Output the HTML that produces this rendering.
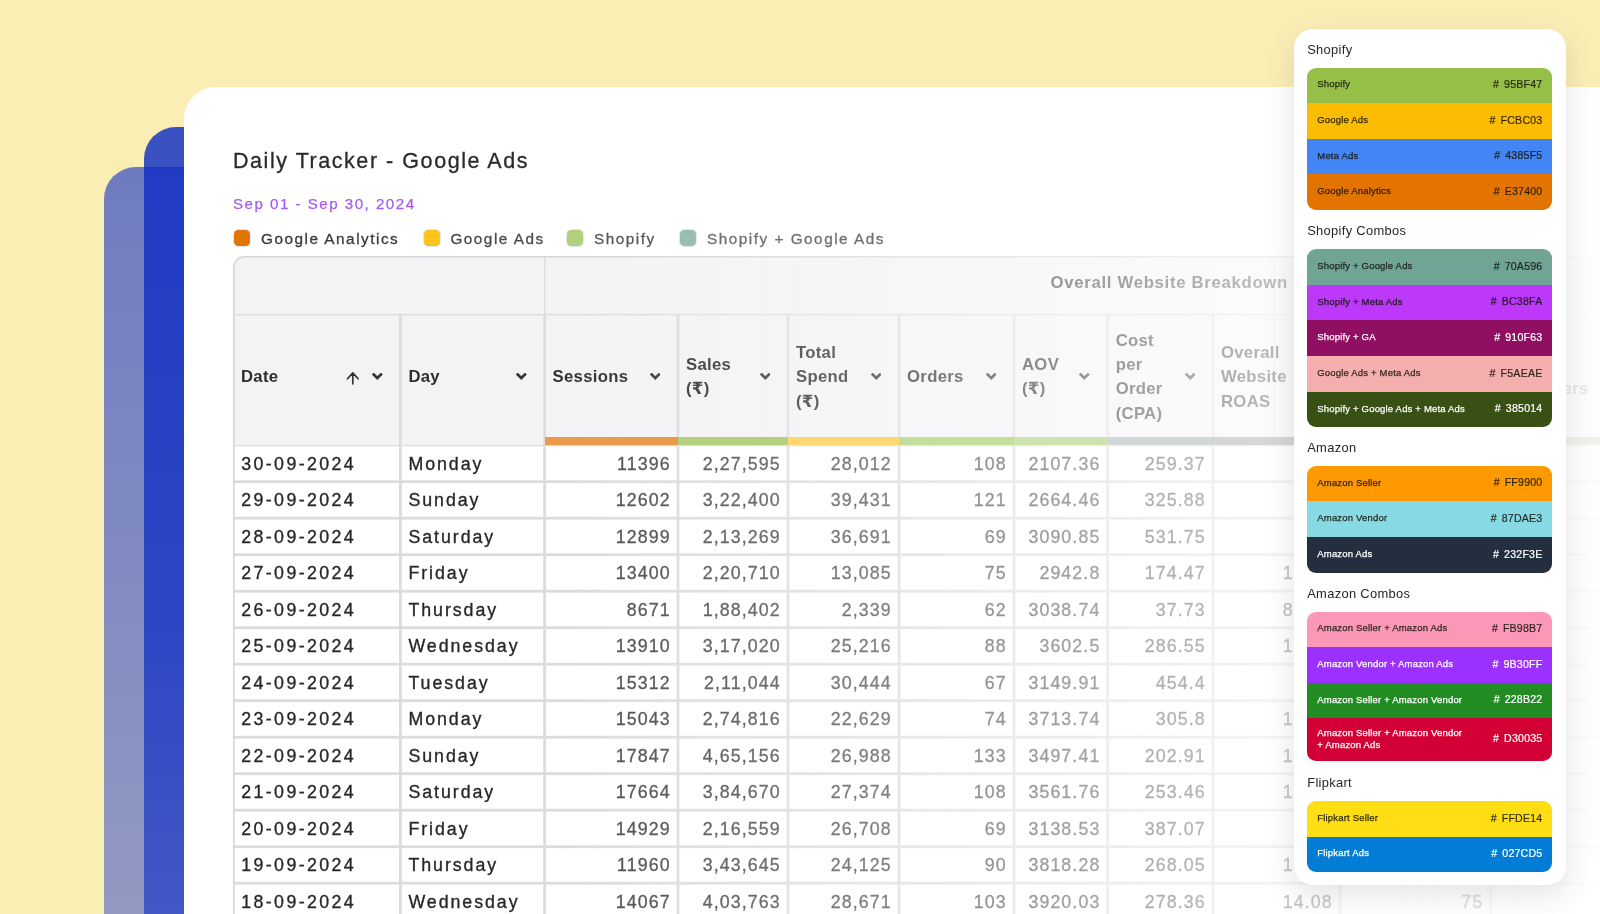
<!DOCTYPE html>
<html lang="en"><head><meta charset="utf-8"><title>Daily Tracker - Google Ads</title>
<style>
*{box-sizing:border-box;margin:0;padding:0}
html,body{width:1600px;height:914px;overflow:hidden}
body{background:#FBEEB5;font-family:"Liberation Sans","DejaVu Sans",sans-serif;position:relative;color:#2b2b2b}
.s1{position:absolute;left:104px;top:167px;width:300px;height:760px;border-radius:32px 0 0 0;background:linear-gradient(to bottom,#6E7BC0 0,#9299C1 100%)}
.s2{position:absolute;left:144px;top:127px;width:300px;height:800px;border-radius:32px 0 0 0;background:linear-gradient(to bottom,#3A51C1 0,#3A51C1 40px,#213BC4 40px,#2D46C4 62%,#4459C5 100%)}
.card{position:absolute;left:184px;top:87px;width:1500px;height:900px;border-radius:32px 0 0 0;background:#fff}
.title{position:absolute;left:232.5px;top:146px;font-size:21.5px;line-height:30px;color:#2a2a2a;letter-spacing:1.55px;white-space:nowrap;-webkit-text-stroke:.3px #2a2a2a}
.date{position:absolute;left:232.5px;top:194.4px;font-size:15.1px;line-height:20px;color:#A65CF3;letter-spacing:1.5px;white-space:nowrap;-webkit-text-stroke:.25px #A65CF3}
.legend{position:absolute;left:233px;top:227px;height:20px;white-space:nowrap;font-size:15.3px;line-height:20px;color:#3a3a3a;letter-spacing:1.52px;-webkit-text-stroke:.3px}
.legend span{position:absolute;top:2px}
.legend i{position:absolute;top:2.6px;width:16px;height:16.4px;border-radius:4.5px;margin-left:.9px;box-shadow:0 0 0 1px rgba(190,205,225,.45)}
.tbl{position:absolute;left:233px;top:256px;width:1367px;height:658px;background:#fff;border-radius:11px 0 0 0;overflow:hidden}
.hbg{position:absolute;left:0;top:0;width:1367px;height:189.6px;background:#F3F3F6}
.grid{position:absolute;left:0;top:0;width:1367px;height:658px}
.gt{position:absolute;left:817.5px;top:17px;font-size:16.7px;line-height:20px;font-weight:bold;color:#3c3c3c;letter-spacing:.72px;white-space:nowrap}
.hc{position:absolute;top:59.5px;height:129.8px;font-weight:bold;font-size:16.7px;line-height:24.3px;color:#2e2e2e;letter-spacing:.3px;display:flex;align-items:center;padding-left:8px;padding-bottom:6px}
.chev{position:absolute;width:10.6px;height:7.1px;top:57.8px;margin-left:.4px;color:#333}
.arr{position:absolute;width:13.6px;height:14.4px;top:55.4px;color:#333}
.c{position:absolute;height:34px;font-size:17.8px;line-height:34px;color:#4a4a4a;white-space:nowrap;letter-spacing:1.1px;-webkit-text-stroke:.3px}
.c.d{padding-left:8.2px;color:#272727;letter-spacing:2.4px;-webkit-text-stroke:.33px}
.c.y{padding-left:8px;color:#272727;letter-spacing:1.95px;-webkit-text-stroke:.33px}
.c.r{text-align:right;padding-right:7.3px}
.fade{position:absolute;left:545px;top:250px;width:1055px;height:664px;background:linear-gradient(to right,rgba(255,255,255,0) 0,rgba(255,255,255,.645) 705px,rgba(255,255,255,.9) 1055px)}
.bar{position:absolute;top:437px;height:8.2px}
.panel{position:absolute;left:1294px;top:29px;width:272px;height:856px;background:#fff;border-radius:19px;box-shadow:0 9px 30px rgba(60,60,90,.15)}
.panel h3{position:absolute;left:13.2px;font-weight:normal;font-size:12.9px;line-height:16px;color:#262626;letter-spacing:.32px;white-space:nowrap;margin-top:.7px}
.grp{position:absolute;left:13.3px;width:245.2px;border-radius:9px;overflow:hidden}
.sw{position:relative;height:35.6px;font-size:9.5px;line-height:12px;color:rgba(20,20,10,.85);letter-spacing:.18px;-webkit-text-stroke:.25px}
.sw span{position:absolute;left:10px;top:10.9px;white-space:nowrap}
.sw em{position:absolute;right:10px;top:10.5px;font-style:normal;font-size:10.6px;letter-spacing:.22px;word-spacing:1.7px;white-space:nowrap;-webkit-text-stroke:.2px}
.sw.w{color:#fff}
.title,.date,.legend,.tbl,.panel{will-change:transform}
</style></head><body>
<div class="s1"></div><div class="s2"></div>
<div class="card"></div>
<div class="title">Daily Tracker - Google Ads</div>
<div class="date">Sep 01 - Sep 30, 2024</div>
<div class="legend">
<i style="left:0.3px;background:#E37400"></i><span style="left:28px">Google Analytics</span>
<i style="left:189.8px;background:#FCC419"></i><span style="left:217.4px;color:#4a4a4a">Google Ads</span>
<i style="left:333px;background:#B1D07C"></i><span style="left:361px;color:#5a5a5a">Shopify</span>
<i style="left:446.6px;background:#97BEB0"></i><span style="left:474px;color:#707070">Shopify + Google Ads</span>
</div>
<div class="tbl"><div class="hbg"></div>
<svg class="grid" viewBox="0 0 1367 658"><rect x="0" y="189" width="1367" height="1.3" fill="#DCDCDC"/><rect x="0" y="224.3" width="1367" height="2.8" fill="#DCDCDC"/><rect x="0" y="260.8" width="1367" height="2.8" fill="#DCDCDC"/><rect x="0" y="297.3" width="1367" height="2.8" fill="#DCDCDC"/><rect x="0" y="333.8" width="1367" height="2.8" fill="#DCDCDC"/><rect x="0" y="370.3" width="1367" height="2.8" fill="#DCDCDC"/><rect x="0" y="406.8" width="1367" height="2.8" fill="#DCDCDC"/><rect x="0" y="443.3" width="1367" height="2.8" fill="#DCDCDC"/><rect x="0" y="479.8" width="1367" height="2.8" fill="#DCDCDC"/><rect x="0" y="516.3" width="1367" height="2.8" fill="#DCDCDC"/><rect x="0" y="552.8" width="1367" height="2.8" fill="#DCDCDC"/><rect x="0" y="589.3" width="1367" height="2.8" fill="#DCDCDC"/><rect x="0" y="625.8" width="1367" height="2.8" fill="#DCDCDC"/><rect x="0" y="662.3" width="1367" height="2.8" fill="#DCDCDC"/><rect x="166" y="59.3" width="2.8" height="600" fill="#DCDCDC"/><rect x="310.2" y="59.3" width="2.8" height="600" fill="#DCDCDC"/><rect x="443.6" y="59.3" width="2.8" height="600" fill="#DCDCDC"/><rect x="553.6" y="59.3" width="2.8" height="600" fill="#DCDCDC"/><rect x="664.7" y="59.3" width="2.8" height="600" fill="#DCDCDC"/><rect x="779.6" y="59.3" width="2.8" height="600" fill="#DCDCDC"/><rect x="873.3" y="59.3" width="2.8" height="600" fill="#DCDCDC"/><rect x="978.6" y="59.3" width="2.8" height="600" fill="#DCDCDC"/><rect x="1105.6" y="59.3" width="2.8" height="600" fill="#DCDCDC"/><rect x="1256.1" y="59.3" width="2.8" height="600" fill="#DCDCDC"/><rect x="0" y="58" width="1367" height="1.35" fill="#DCDCDC"/><rect x="311" y="0" width="1.3" height="58" fill="#DCDCDC"/><path d="M0.8 660 V11 A10.2 10.2 0 0 1 11 0.8 H1400" fill="none" stroke="#D6D6D6" stroke-width="1.6"/></svg>
<div class="gt">Overall Website Breakdown</div>
<div class="hc" style="left:0px;width:167.4px"><div>Date</div><svg class="chev" style="left:138.8px" viewBox="0 0 12 8"><path d="M1.9 1.7 L6 5.7 L10.1 1.7" fill="none" stroke="currentColor" stroke-width="3" stroke-linecap="square" stroke-linejoin="miter"/></svg><svg class="arr" style="left:113.4px" viewBox="0 0 14 14"><path d="M7 13 V1.6 M1.5 7.6 L7 1.5 L12.5 7.6" fill="none" stroke="currentColor" stroke-width="1.7" stroke-linecap="round" stroke-linejoin="round"/></svg></div>
<div class="hc" style="left:167.4px;width:144.2px"><div>Day</div><svg class="chev" style="left:115.6px" viewBox="0 0 12 8"><path d="M1.9 1.7 L6 5.7 L10.1 1.7" fill="none" stroke="currentColor" stroke-width="3" stroke-linecap="square" stroke-linejoin="miter"/></svg></div>
<div class="hc" style="left:311.6px;width:133.4px"><div>Sessions</div><svg class="chev" style="left:104.8px" viewBox="0 0 12 8"><path d="M1.9 1.7 L6 5.7 L10.1 1.7" fill="none" stroke="currentColor" stroke-width="3" stroke-linecap="square" stroke-linejoin="miter"/></svg></div>
<div class="hc" style="left:445px;width:110px"><div>Sales<br>(₹)</div><svg class="chev" style="left:81.4px" viewBox="0 0 12 8"><path d="M1.9 1.7 L6 5.7 L10.1 1.7" fill="none" stroke="currentColor" stroke-width="3" stroke-linecap="square" stroke-linejoin="miter"/></svg></div>
<div class="hc" style="left:555px;width:111.1px"><div>Total<br>Spend<br>(₹)</div><svg class="chev" style="left:82.5px" viewBox="0 0 12 8"><path d="M1.9 1.7 L6 5.7 L10.1 1.7" fill="none" stroke="currentColor" stroke-width="3" stroke-linecap="square" stroke-linejoin="miter"/></svg></div>
<div class="hc" style="left:666.1px;width:114.9px"><div>Orders</div><svg class="chev" style="left:86.3px" viewBox="0 0 12 8"><path d="M1.9 1.7 L6 5.7 L10.1 1.7" fill="none" stroke="currentColor" stroke-width="3" stroke-linecap="square" stroke-linejoin="miter"/></svg></div>
<div class="hc" style="left:781px;width:93.7px"><div>AOV<br>(₹)</div><svg class="chev" style="left:65.1px" viewBox="0 0 12 8"><path d="M1.9 1.7 L6 5.7 L10.1 1.7" fill="none" stroke="currentColor" stroke-width="3" stroke-linecap="square" stroke-linejoin="miter"/></svg></div>
<div class="hc" style="left:874.7px;width:105.3px"><div>Cost<br>per<br>Order<br>(CPA)</div><svg class="chev" style="left:76.7px" viewBox="0 0 12 8"><path d="M1.9 1.7 L6 5.7 L10.1 1.7" fill="none" stroke="currentColor" stroke-width="3" stroke-linecap="square" stroke-linejoin="miter"/></svg></div>
<div class="hc" style="left:980px;width:127px"><div>Overall<br>Website<br>ROAS</div><svg class="chev" style="left:98.4px" viewBox="0 0 12 8"><path d="M1.9 1.7 L6 5.7 L10.1 1.7" fill="none" stroke="currentColor" stroke-width="3" stroke-linecap="square" stroke-linejoin="miter"/></svg></div>
<div class="hc" style="left:1107px;width:150.5px"><div>Shopify<br>Orders</div><svg class="chev" style="left:121.9px" viewBox="0 0 12 8"><path d="M1.9 1.7 L6 5.7 L10.1 1.7" fill="none" stroke="currentColor" stroke-width="3" stroke-linecap="square" stroke-linejoin="miter"/></svg></div>
<div class="hc" style="left:1257.5px;width:169.5px"><div>New<br>Customers</div><svg class="chev" style="left:140.9px" viewBox="0 0 12 8"><path d="M1.9 1.7 L6 5.7 L10.1 1.7" fill="none" stroke="currentColor" stroke-width="3" stroke-linecap="square" stroke-linejoin="miter"/></svg></div>
<div class="c d" style="left:0px;top:190.9px;width:167.4px">30-09-2024</div>
<div class="c y" style="left:167.4px;top:190.9px;width:144.2px">Monday</div>
<div class="c r" style="left:311.6px;top:190.9px;width:133.4px">11396</div>
<div class="c r" style="left:445px;top:190.9px;width:110px">2,27,595</div>
<div class="c r" style="left:555px;top:190.9px;width:111.1px">28,012</div>
<div class="c r" style="left:666.1px;top:190.9px;width:114.9px">108</div>
<div class="c r" style="left:781px;top:190.9px;width:93.7px">2107.36</div>
<div class="c r" style="left:874.7px;top:190.9px;width:105.3px">259.37</div>
<div class="c r" style="left:980px;top:190.9px;width:127px">8.12</div>
<div class="c r" style="left:1107px;top:190.9px;width:150.5px">108</div>
<div class="c d" style="left:0px;top:227.4px;width:167.4px">29-09-2024</div>
<div class="c y" style="left:167.4px;top:227.4px;width:144.2px">Sunday</div>
<div class="c r" style="left:311.6px;top:227.4px;width:133.4px">12602</div>
<div class="c r" style="left:445px;top:227.4px;width:110px">3,22,400</div>
<div class="c r" style="left:555px;top:227.4px;width:111.1px">39,431</div>
<div class="c r" style="left:666.1px;top:227.4px;width:114.9px">121</div>
<div class="c r" style="left:781px;top:227.4px;width:93.7px">2664.46</div>
<div class="c r" style="left:874.7px;top:227.4px;width:105.3px">325.88</div>
<div class="c r" style="left:980px;top:227.4px;width:127px">8.18</div>
<div class="c r" style="left:1107px;top:227.4px;width:150.5px">121</div>
<div class="c d" style="left:0px;top:263.9px;width:167.4px">28-09-2024</div>
<div class="c y" style="left:167.4px;top:263.9px;width:144.2px">Saturday</div>
<div class="c r" style="left:311.6px;top:263.9px;width:133.4px">12899</div>
<div class="c r" style="left:445px;top:263.9px;width:110px">2,13,269</div>
<div class="c r" style="left:555px;top:263.9px;width:111.1px">36,691</div>
<div class="c r" style="left:666.1px;top:263.9px;width:114.9px">69</div>
<div class="c r" style="left:781px;top:263.9px;width:93.7px">3090.85</div>
<div class="c r" style="left:874.7px;top:263.9px;width:105.3px">531.75</div>
<div class="c r" style="left:980px;top:263.9px;width:127px">5.81</div>
<div class="c r" style="left:1107px;top:263.9px;width:150.5px">69</div>
<div class="c d" style="left:0px;top:300.4px;width:167.4px">27-09-2024</div>
<div class="c y" style="left:167.4px;top:300.4px;width:144.2px">Friday</div>
<div class="c r" style="left:311.6px;top:300.4px;width:133.4px">13400</div>
<div class="c r" style="left:445px;top:300.4px;width:110px">2,20,710</div>
<div class="c r" style="left:555px;top:300.4px;width:111.1px">13,085</div>
<div class="c r" style="left:666.1px;top:300.4px;width:114.9px">75</div>
<div class="c r" style="left:781px;top:300.4px;width:93.7px">2942.8</div>
<div class="c r" style="left:874.7px;top:300.4px;width:105.3px">174.47</div>
<div class="c r" style="left:980px;top:300.4px;width:127px">16.87</div>
<div class="c r" style="left:1107px;top:300.4px;width:150.5px">75</div>
<div class="c d" style="left:0px;top:336.9px;width:167.4px">26-09-2024</div>
<div class="c y" style="left:167.4px;top:336.9px;width:144.2px">Thursday</div>
<div class="c r" style="left:311.6px;top:336.9px;width:133.4px">8671</div>
<div class="c r" style="left:445px;top:336.9px;width:110px">1,88,402</div>
<div class="c r" style="left:555px;top:336.9px;width:111.1px">2,339</div>
<div class="c r" style="left:666.1px;top:336.9px;width:114.9px">62</div>
<div class="c r" style="left:781px;top:336.9px;width:93.7px">3038.74</div>
<div class="c r" style="left:874.7px;top:336.9px;width:105.3px">37.73</div>
<div class="c r" style="left:980px;top:336.9px;width:127px">80.55</div>
<div class="c r" style="left:1107px;top:336.9px;width:150.5px">62</div>
<div class="c d" style="left:0px;top:373.4px;width:167.4px">25-09-2024</div>
<div class="c y" style="left:167.4px;top:373.4px;width:144.2px">Wednesday</div>
<div class="c r" style="left:311.6px;top:373.4px;width:133.4px">13910</div>
<div class="c r" style="left:445px;top:373.4px;width:110px">3,17,020</div>
<div class="c r" style="left:555px;top:373.4px;width:111.1px">25,216</div>
<div class="c r" style="left:666.1px;top:373.4px;width:114.9px">88</div>
<div class="c r" style="left:781px;top:373.4px;width:93.7px">3602.5</div>
<div class="c r" style="left:874.7px;top:373.4px;width:105.3px">286.55</div>
<div class="c r" style="left:980px;top:373.4px;width:127px">12.57</div>
<div class="c r" style="left:1107px;top:373.4px;width:150.5px">88</div>
<div class="c d" style="left:0px;top:409.9px;width:167.4px">24-09-2024</div>
<div class="c y" style="left:167.4px;top:409.9px;width:144.2px">Tuesday</div>
<div class="c r" style="left:311.6px;top:409.9px;width:133.4px">15312</div>
<div class="c r" style="left:445px;top:409.9px;width:110px">2,11,044</div>
<div class="c r" style="left:555px;top:409.9px;width:111.1px">30,444</div>
<div class="c r" style="left:666.1px;top:409.9px;width:114.9px">67</div>
<div class="c r" style="left:781px;top:409.9px;width:93.7px">3149.91</div>
<div class="c r" style="left:874.7px;top:409.9px;width:105.3px">454.4</div>
<div class="c r" style="left:980px;top:409.9px;width:127px">6.93</div>
<div class="c r" style="left:1107px;top:409.9px;width:150.5px">67</div>
<div class="c d" style="left:0px;top:446.4px;width:167.4px">23-09-2024</div>
<div class="c y" style="left:167.4px;top:446.4px;width:144.2px">Monday</div>
<div class="c r" style="left:311.6px;top:446.4px;width:133.4px">15043</div>
<div class="c r" style="left:445px;top:446.4px;width:110px">2,74,816</div>
<div class="c r" style="left:555px;top:446.4px;width:111.1px">22,629</div>
<div class="c r" style="left:666.1px;top:446.4px;width:114.9px">74</div>
<div class="c r" style="left:781px;top:446.4px;width:93.7px">3713.74</div>
<div class="c r" style="left:874.7px;top:446.4px;width:105.3px">305.8</div>
<div class="c r" style="left:980px;top:446.4px;width:127px">12.14</div>
<div class="c r" style="left:1107px;top:446.4px;width:150.5px">74</div>
<div class="c d" style="left:0px;top:482.9px;width:167.4px">22-09-2024</div>
<div class="c y" style="left:167.4px;top:482.9px;width:144.2px">Sunday</div>
<div class="c r" style="left:311.6px;top:482.9px;width:133.4px">17847</div>
<div class="c r" style="left:445px;top:482.9px;width:110px">4,65,156</div>
<div class="c r" style="left:555px;top:482.9px;width:111.1px">26,988</div>
<div class="c r" style="left:666.1px;top:482.9px;width:114.9px">133</div>
<div class="c r" style="left:781px;top:482.9px;width:93.7px">3497.41</div>
<div class="c r" style="left:874.7px;top:482.9px;width:105.3px">202.91</div>
<div class="c r" style="left:980px;top:482.9px;width:127px">17.24</div>
<div class="c r" style="left:1107px;top:482.9px;width:150.5px">133</div>
<div class="c d" style="left:0px;top:519.4px;width:167.4px">21-09-2024</div>
<div class="c y" style="left:167.4px;top:519.4px;width:144.2px">Saturday</div>
<div class="c r" style="left:311.6px;top:519.4px;width:133.4px">17664</div>
<div class="c r" style="left:445px;top:519.4px;width:110px">3,84,670</div>
<div class="c r" style="left:555px;top:519.4px;width:111.1px">27,374</div>
<div class="c r" style="left:666.1px;top:519.4px;width:114.9px">108</div>
<div class="c r" style="left:781px;top:519.4px;width:93.7px">3561.76</div>
<div class="c r" style="left:874.7px;top:519.4px;width:105.3px">253.46</div>
<div class="c r" style="left:980px;top:519.4px;width:127px">14.05</div>
<div class="c r" style="left:1107px;top:519.4px;width:150.5px">108</div>
<div class="c d" style="left:0px;top:555.9px;width:167.4px">20-09-2024</div>
<div class="c y" style="left:167.4px;top:555.9px;width:144.2px">Friday</div>
<div class="c r" style="left:311.6px;top:555.9px;width:133.4px">14929</div>
<div class="c r" style="left:445px;top:555.9px;width:110px">2,16,559</div>
<div class="c r" style="left:555px;top:555.9px;width:111.1px">26,708</div>
<div class="c r" style="left:666.1px;top:555.9px;width:114.9px">69</div>
<div class="c r" style="left:781px;top:555.9px;width:93.7px">3138.53</div>
<div class="c r" style="left:874.7px;top:555.9px;width:105.3px">387.07</div>
<div class="c r" style="left:980px;top:555.9px;width:127px">8.11</div>
<div class="c r" style="left:1107px;top:555.9px;width:150.5px">69</div>
<div class="c d" style="left:0px;top:592.4px;width:167.4px">19-09-2024</div>
<div class="c y" style="left:167.4px;top:592.4px;width:144.2px">Thursday</div>
<div class="c r" style="left:311.6px;top:592.4px;width:133.4px">11960</div>
<div class="c r" style="left:445px;top:592.4px;width:110px">3,43,645</div>
<div class="c r" style="left:555px;top:592.4px;width:111.1px">24,125</div>
<div class="c r" style="left:666.1px;top:592.4px;width:114.9px">90</div>
<div class="c r" style="left:781px;top:592.4px;width:93.7px">3818.28</div>
<div class="c r" style="left:874.7px;top:592.4px;width:105.3px">268.05</div>
<div class="c r" style="left:980px;top:592.4px;width:127px">14.24</div>
<div class="c r" style="left:1107px;top:592.4px;width:150.5px">90</div>
<div class="c d" style="left:0px;top:628.9px;width:167.4px">18-09-2024</div>
<div class="c y" style="left:167.4px;top:628.9px;width:144.2px">Wednesday</div>
<div class="c r" style="left:311.6px;top:628.9px;width:133.4px">14067</div>
<div class="c r" style="left:445px;top:628.9px;width:110px">4,03,763</div>
<div class="c r" style="left:555px;top:628.9px;width:111.1px">28,671</div>
<div class="c r" style="left:666.1px;top:628.9px;width:114.9px">103</div>
<div class="c r" style="left:781px;top:628.9px;width:93.7px">3920.03</div>
<div class="c r" style="left:874.7px;top:628.9px;width:105.3px">278.36</div>
<div class="c r" style="left:980px;top:628.9px;width:127px">14.08</div>
<div class="c r" style="left:1107px;top:628.9px;width:150.5px">75</div>
</div>
<div class="fade"></div>
<div class="bar" style="left:544.6px;width:133.4px;background:#EB9A4B"></div>
<div class="bar" style="left:678px;width:110px;background:#B5CF80"></div>
<div class="bar" style="left:788px;width:111.1px;background:#FDD870"></div>
<div class="bar" style="left:899.1px;width:114.9px;background:#C3DF9C"></div>
<div class="bar" style="left:1014px;width:93.7px;background:#D0E3AF"></div>
<div class="bar" style="left:1107.7px;width:105.3px;background:#D2D7D7"></div>
<div class="bar" style="left:1213px;width:127px;background:#D6D6D6"></div>
<div class="bar" style="left:1340px;width:150.5px;background:#E6E6E6"></div>
<div class="bar" style="left:1490.5px;width:169.5px;background:#F2F1EC"></div>
<div class="panel">
<h3 style="top:12px">Shopify</h3>
<div class="grp" style="top:38.6px">
<div class="sw" style="background:#95BF47"><span>Shopify</span><em># 95BF47</em></div>
<div class="sw" style="background:#FCBC03"><span>Google Ads</span><em># FCBC03</em></div>
<div class="sw" style="background:#4385F5"><span>Meta Ads</span><em># 4385F5</em></div>
<div class="sw" style="background:#E37400"><span>Google Analytics</span><em># E37400</em></div>
</div>
<h3 style="top:193.5px">Shopify Combos</h3>
<div class="grp" style="top:220.3px">
<div class="sw" style="background:#70A596"><span>Shopify + Google Ads</span><em># 70A596</em></div>
<div class="sw" style="background:#BC38FA"><span>Shopify + Meta Ads</span><em># BC38FA</em></div>
<div class="sw w" style="background:#910F63"><span>Shopify + GA</span><em># 910F63</em></div>
<div class="sw" style="background:#F5AEAE"><span>Google Ads + Meta Ads</span><em># F5AEAE</em></div>
<div class="sw w" style="background:#385014"><span>Shopify + Google Ads + Meta Ads</span><em># 385014</em></div>
</div>
<h3 style="top:410.5px">Amazon</h3>
<div class="grp" style="top:436.9px">
<div class="sw" style="background:#FF9900"><span>Amazon Seller</span><em># FF9900</em></div>
<div class="sw" style="background:#87DAE3"><span>Amazon Vendor</span><em># 87DAE3</em></div>
<div class="sw w" style="background:#232F3E"><span>Amazon Ads</span><em># 232F3E</em></div>
</div>
<h3 style="top:556px">Amazon Combos</h3>
<div class="grp" style="top:582.5px">
<div class="sw" style="background:#FB98B7"><span>Amazon Seller + Amazon Ads</span><em># FB98B7</em></div>
<div class="sw w" style="background:#9B30FF"><span>Amazon Vendor + Amazon Ads</span><em># 9B30FF</em></div>
<div class="sw w" style="background:#228B22"><span>Amazon Seller + Amazon Vendor</span><em># 228B22</em></div>
<div class="sw w" style="background:#D30035;height:43px"><span style="top:8.5px">Amazon Seller + Amazon Vendor<br>+ Amazon Ads</span><em style="top:14px"># D30035</em></div>
</div>
<h3 style="top:745px">Flipkart</h3>
<div class="grp" style="top:772px">
<div class="sw" style="background:#FFDE14"><span>Flipkart Seller</span><em># FFDE14</em></div>
<div class="sw w" style="background:#027CD5"><span>Flipkart Ads</span><em># 027CD5</em></div>
</div>
</div>
</body></html>
